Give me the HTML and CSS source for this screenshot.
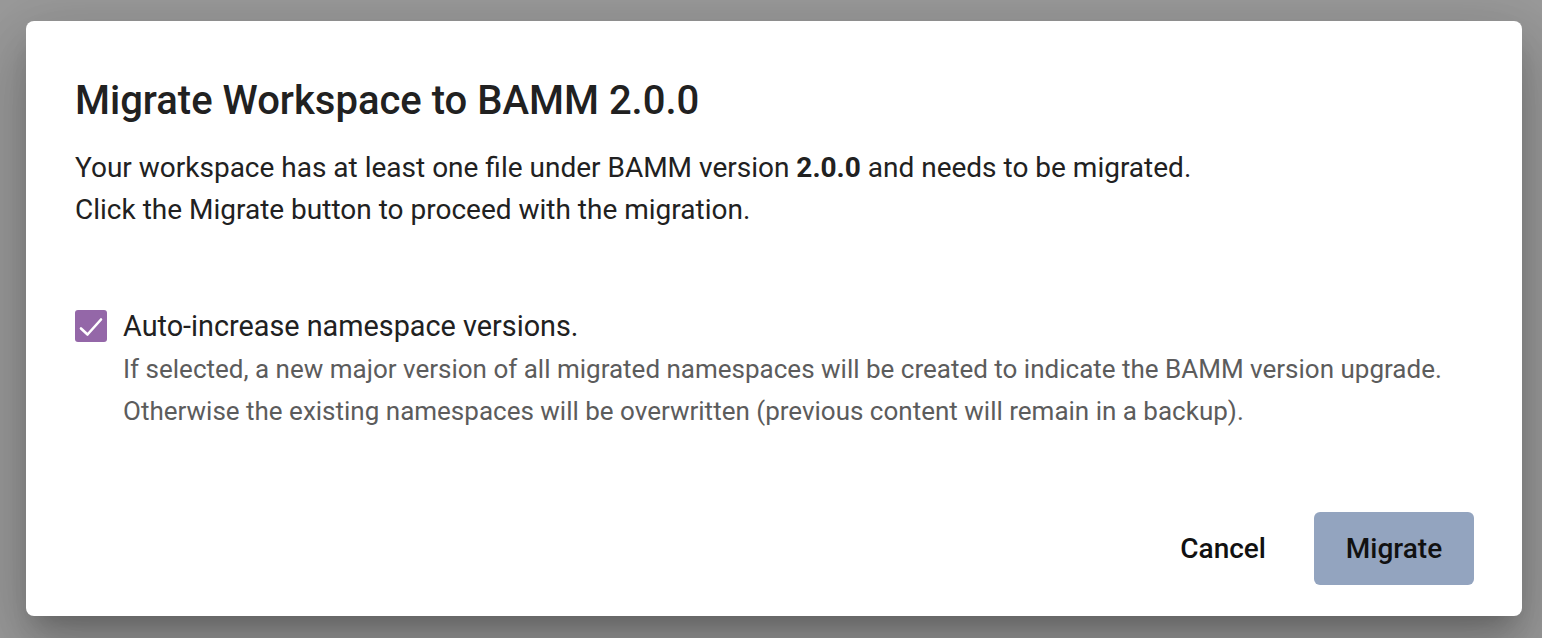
FILE: index.html
```html
<!DOCTYPE html>
<html>
<head>
<meta charset="utf-8">
<link rel="stylesheet" href="styles.css">
</head>
<body>
<div class="backdrop">
  <div class="dialog">
    <h1 class="title">Migrate Workspace to BAMM 2.0.0</h1>
    <div class="content">
      <p class="text">Your workspace has at least one file under BAMM version <b>2.0.0</b> and needs to be migrated.<br>Click the Migrate button to proceed with the migration.</p>
      <div class="option">
        <span class="checkbox">
          <svg width="32" height="32" viewBox="0 0 32 32"><path d="M6 18.5 L12.5 24.5 L26 9.5" fill="none" stroke="#fff" stroke-width="2.6" stroke-linecap="round" stroke-linejoin="round"/></svg>
        </span>
        <div class="option-text">
          <div class="label">Auto-increase namespace versions.</div>
          <div class="hint">If selected, a new major version of all migrated namespaces will be created to indicate the BAMM version upgrade.<br>Otherwise the existing namespaces will be overwritten (previous content will remain in a backup).</div>
        </div>
      </div>
    </div>
    <div class="actions">
      <button class="btn btn-text">Cancel</button>
      <button class="btn btn-primary">Migrate</button>
    </div>
  </div>
</div>
</body>
</html>
```
FILE: styles.css
```css
html, body {
  margin: 0;
  padding: 0;
  height: 100%;
}
body {
  background: #9a9a9a;
  font-family: Roboto, "Liberation Sans", sans-serif;
  overflow: hidden;
}
.backdrop {
  padding: 21px 20px 0 26px;
}
.dialog {
  box-sizing: border-box;
  width: 1496px;
  height: 595px;
  background: #fff;
  border-radius: 8px;
  box-shadow: 0 16px 22px -10px rgba(0,0,0,0.2), 0 36px 56px 4px rgba(0,0,0,0.14), 0 14px 68px 12px rgba(0,0,0,0.12);
  padding: 0 48px 0 49px;
  display: flex;
  flex-direction: column;
}
.title {
  margin: 0;
  padding-top: 56px;
  font-size: 40px;
  line-height: 48px;
  font-weight: 500;
  color: #212121;
}
.content {
  padding-top: 22px;
  flex: 1;
}
.text {
  margin: 0;
  font-size: 28px;
  line-height: 42px;
  color: #212121;
}
.text b {
  font-weight: 700;
}
.option {
  display: flex;
  gap: 16px;
  margin-top: 79px;
}
.checkbox {
  flex: none;
  width: 32px;
  height: 32px;
  border-radius: 3px;
  background: #9467a8;
  display: flex;
}
.label {
  font-size: 28.8px;
  line-height: 32px;
  color: #212121;
}
.hint {
  margin-top: 6px;
  font-size: 26px;
  line-height: 42px;
  color: #5c5c5c;
}
.actions {
  display: flex;
  justify-content: flex-end;
  align-items: center;
  gap: 22px;
  padding-bottom: 31px;
}
.btn {
  font-family: inherit;
  font-size: 28px;
  font-weight: 500;
  border: none;
  border-radius: 6px;
  height: 73px;
  color: #111;
  cursor: pointer;
}
.btn-text {
  background: transparent;
  padding: 0 26px;
}
.btn-primary {
  background: #93a4bf;
  width: 160px;
  padding: 0;
}
```
